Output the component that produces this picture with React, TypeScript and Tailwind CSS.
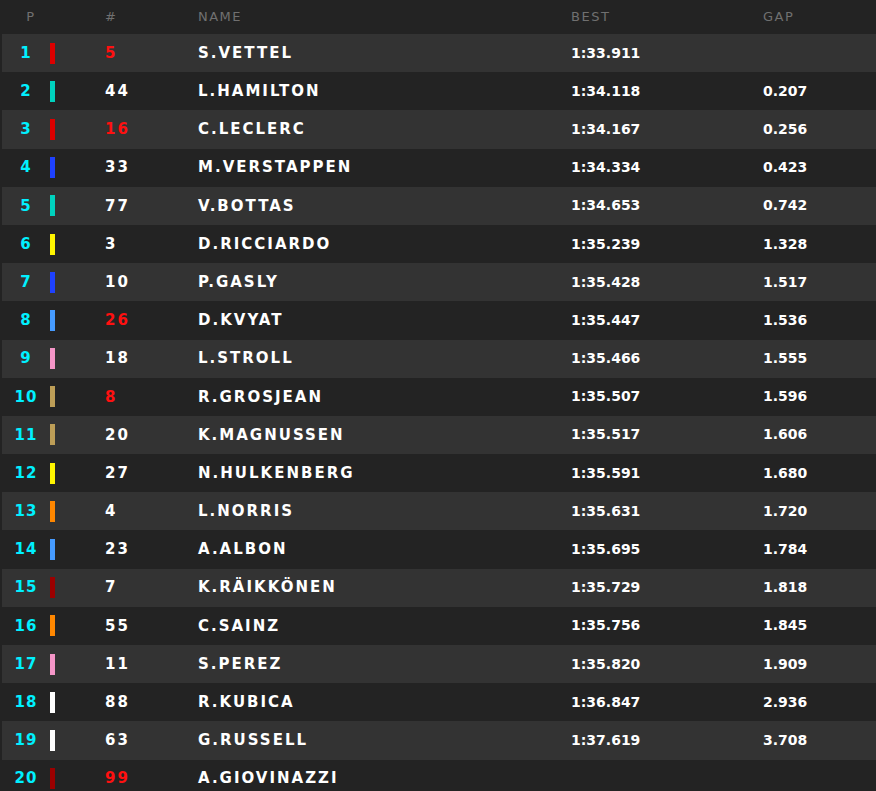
import React from 'react';

type Entry = {
  pos: number;
  num: string;
  name: string;
  best: string;
  gap: string;
  team: string;
  hot?: boolean;
};

const entries: Entry[] = [
  { pos: 1, num: '5', name: 'S.VETTEL', best: '1:33.911', gap: '', team: '#dc0000', hot: true },
  { pos: 2, num: '44', name: 'L.HAMILTON', best: '1:34.118', gap: '0.207', team: '#00d2be' },
  { pos: 3, num: '16', name: 'C.LECLERC', best: '1:34.167', gap: '0.256', team: '#dc0000', hot: true },
  { pos: 4, num: '33', name: 'M.VERSTAPPEN', best: '1:34.334', gap: '0.423', team: '#1e41ff' },
  { pos: 5, num: '77', name: 'V.BOTTAS', best: '1:34.653', gap: '0.742', team: '#00d2be' },
  { pos: 6, num: '3', name: 'D.RICCIARDO', best: '1:35.239', gap: '1.328', team: '#fff500' },
  { pos: 7, num: '10', name: 'P.GASLY', best: '1:35.428', gap: '1.517', team: '#1e41ff' },
  { pos: 8, num: '26', name: 'D.KVYAT', best: '1:35.447', gap: '1.536', team: '#469bff', hot: true },
  { pos: 9, num: '18', name: 'L.STROLL', best: '1:35.466', gap: '1.555', team: '#f596c8' },
  { pos: 10, num: '8', name: 'R.GROSJEAN', best: '1:35.507', gap: '1.596', team: '#bd9e57', hot: true },
  { pos: 11, num: '20', name: 'K.MAGNUSSEN', best: '1:35.517', gap: '1.606', team: '#bd9e57' },
  { pos: 12, num: '27', name: 'N.HULKENBERG', best: '1:35.591', gap: '1.680', team: '#fff500' },
  { pos: 13, num: '4', name: 'L.NORRIS', best: '1:35.631', gap: '1.720', team: '#ff8700' },
  { pos: 14, num: '23', name: 'A.ALBON', best: '1:35.695', gap: '1.784', team: '#469bff' },
  { pos: 15, num: '7', name: 'K.RÄIKKÖNEN', best: '1:35.729', gap: '1.818', team: '#9b0000' },
  { pos: 16, num: '55', name: 'C.SAINZ', best: '1:35.756', gap: '1.845', team: '#ff8700' },
  { pos: 17, num: '11', name: 'S.PEREZ', best: '1:35.820', gap: '1.909', team: '#f596c8' },
  { pos: 18, num: '88', name: 'R.KUBICA', best: '1:36.847', gap: '2.936', team: '#ffffff' },
  { pos: 19, num: '63', name: 'G.RUSSELL', best: '1:37.619', gap: '3.708', team: '#ffffff' },
  { pos: 20, num: '99', name: 'A.GIOVINAZZI', best: '', gap: '', team: '#9b0000', hot: true },
];

export default function App() {
  return (
    <div className="w-[876px] h-[791px] overflow-hidden bg-[#232323] font-['DejaVu_Sans',sans-serif]">
      {/* header */}
      <div className="h-[34px] flex items-center text-[13px] tracking-[1.5px] text-[#707070] ml-[2px]">
        <div className="w-[48px] text-center pl-[10px]">P</div>
        <div className="w-[55px]" />
        <div className="w-[93px]">#</div>
        <div className="w-[373px]">NAME</div>
        <div className="w-[192px]">BEST</div>
        <div>GAP</div>
      </div>

      {entries.map((e) => (
        <div
          key={e.pos}
          className={
            'h-[38.2px] flex items-center ml-[2px] ' +
            (e.pos % 2 === 1 ? 'bg-[#333333]' : '')
          }
        >
          <div className="w-[48px] text-center text-[15px] font-bold tracking-[1px] text-[#00f0ff]">
            {e.pos}
          </div>
          <div className="w-[5px] h-[21px]" style={{ backgroundColor: e.team }} />
          <div className="w-[50px]" />
          <div
            className={
              'w-[93px] text-[15px] font-bold tracking-[2px] ' +
              (e.hot ? 'text-[#ff1010]' : 'text-white')
            }
          >
            {e.num}
          </div>
          <div className="w-[373px] text-[15px] font-bold tracking-[2px] text-white">
            {e.name}
          </div>
          <div className="w-[192px] text-[14px] font-bold text-white">{e.best}</div>
          <div className="text-[14px] font-bold text-white">{e.gap}</div>
        </div>
      ))}
    </div>
  );
}
